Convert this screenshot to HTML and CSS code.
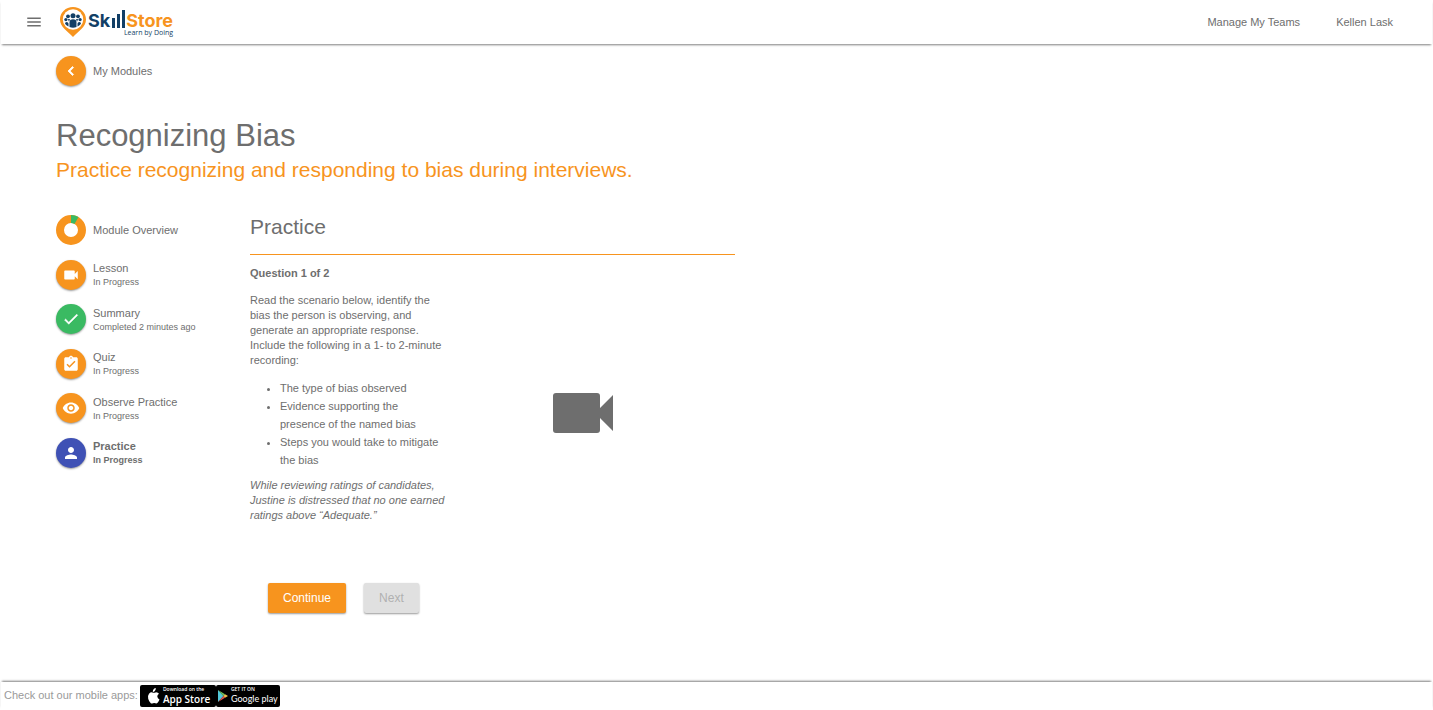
FILE: index.html
```html
<!DOCTYPE html>
<html lang="en">
<head>
<meta charset="utf-8">
<title>SkillStore - Recognizing Bias</title>
<link rel="stylesheet" href="styles.css">
</head>
<body>
<header class="topbar">
  <button class="menu-btn" aria-label="Menu">
    <svg width="18" height="18" viewBox="0 0 24 24"><path d="M3 18h18v-2H3v2zm0-5h18v-2H3v2zm0-7v2h18V6H3z"/></svg>
  </button>
  <a class="logo" href="#">
    <svg width="26" height="30" viewBox="0 0 26 30" aria-hidden="true">
      <path fill="#f7941e" d="M13 0C5.800 0 0 5.500 0 12.500C0 20 8 24.500 13 30C18 24.500 26 20 26 12.500C26 5.500 20.200 0 13 0z"/>
      <circle cx="13" cy="12.500" r="10.200" fill="#fff"/>
      <g fill="#123f66">
        <circle cx="13" cy="8.800" r="2.500"/>
        <circle cx="8" cy="9.300" r="1.900"/>
        <circle cx="18" cy="9.300" r="1.900"/>
        <circle cx="5.900" cy="12.600" r="1.600"/>
        <circle cx="20.100" cy="12.600" r="1.600"/>
        <path d="M9.500 20v-4.500q0-3.300 3.500-3.300t3.500 3.300V20q-3.500 1.300-7 0z"/>
        <path d="M5 16.800q0-1.900 1.700-1.900t1.800 1.700v2.800q-2.300-.8-3.500-2.600zM21 16.800q0-1.900-1.700-1.900t-1.800 1.700v2.800q2.300-.8 3.500-2.600z"/>
        <path d="M7.800 12l2.400.2-1.300 2.200zM18.200 12l-2.400.2 1.300 2.200z"/>
      </g>
    </svg>
    <span class="wordmark">
      <span class="brand"><span class="brand-skill">Sk</span><svg width="15" height="18" viewBox="0 0 15 18" role="img" aria-label="ill"><path fill="#123f66" d="M1 8h3v10H1zM6 4h3v14H6zM11 0h3v18h-3z"/></svg><span class="brand-store">Store</span></span>
      <span class="tagline">Learn by Doing</span>
    </span>
  </a>
  <nav class="topnav">
    <a href="#">Manage My Teams</a>
    <a href="#">Kellen Lask</a>
  </nav>
</header>

<main class="page">
  <a class="step back" href="#">
    <span class="disc"><svg width="18" height="18" viewBox="0 0 24 24"><path d="M15.410 7.410L14 6l-6 6 6 6 1.410-1.410L10.830 12z" stroke="#fff"/></svg></span>
    <span>My Modules</span>
  </a>
  <h1 class="title">Recognizing Bias</h1>
  <p class="subtitle">Practice recognizing and responding to bias during interviews.</p>

  <div class="columns">
    <nav class="steps">
      <a class="step" href="#">
        <svg width="30" height="30" viewBox="0 0 30 30"><circle cx="15" cy="15" r="11" fill="none" stroke="#f7941e" stroke-width="8"/><path d="M15 0A15 15 0 0 1 22.500 2L18.500 9A7 7 0 0 0 15 8z" fill="#3aba62"/></svg>
        <span>Module Overview</span>
      </a>
      <a class="step" href="#">
        <span class="disc"><svg width="18" height="18" viewBox="0 0 24 24"><path d="M17 10.500V7c0-.55-.45-1-1-1H4c-.55 0-1 .45-1 1v10c0 .55.45 1 1 1h12c.55 0 1-.45 1-1v-3.500l4 4v-11l-4 4z"/></svg></span>
        <span>Lesson<small>In Progress</small></span>
      </a>
      <a class="step" href="#">
        <span class="disc done"><svg width="18" height="18" viewBox="0 0 24 24"><path d="M9 16.170L4.830 12l-1.420 1.410L9 19 21 7l-1.410-1.410z" stroke="#fff" stroke-width=".6"/></svg></span>
        <span>Summary<small>Completed 2 minutes ago</small></span>
      </a>
      <a class="step" href="#">
        <span class="disc"><svg width="18" height="18" viewBox="0 0 24 24"><path d="M19 3h-4.180C14.400 1.840 13.300 1 12 1c-1.300 0-2.400.84-2.820 2H5c-1.100 0-2 .9-2 2v14c0 1.100.9 2 2 2h14c1.100 0 2-.9 2-2V5c0-1.100-.9-2-2-2zm-7 0c.55 0 1 .45 1 1s-.45 1-1 1-1-.45-1-1 .45-1 1-1zm-2 14l-4-4 1.410-1.410L10 14.170l6.590-6.590L18 9l-8 8z"/></svg></span>
        <span>Quiz<small>In Progress</small></span>
      </a>
      <a class="step" href="#">
        <span class="disc"><svg width="18" height="18" viewBox="0 0 24 24"><path d="M12 4.500C7 4.500 2.730 7.610 1 12c1.730 4.390 6 7.500 11 7.500s9.270-3.110 11-7.500c-1.730-4.390-6-7.500-11-7.500zM12 17c-2.760 0-5-2.240-5-5s2.240-5 5-5 5 2.240 5 5-2.240 5-5 5zm0-8c-1.660 0-3 1.340-3 3s1.340 3 3 3 3-1.340 3-3-1.340-3-3-3z"/></svg></span>
        <span>Observe Practice<small>In Progress</small></span>
      </a>
      <a class="step current" href="#" aria-current="step">
        <span class="disc active"><svg width="18" height="18" viewBox="0 0 24 24"><path d="M12 12c2.210 0 4-1.790 4-4s-1.790-4-4-4-4 1.790-4 4 1.790 4 4 4zm0 2c-2.670 0-8 1.340-8 4v2h16v-2c0-2.660-5.330-4-8-4z"/></svg></span>
        <span>Practice<small>In Progress</small></span>
      </a>
    </nav>

    <section class="practice">
      <h2 class="section-title">Practice</h2>
      <div class="question">
        <div class="prompt">
          <h3>Question 1 of 2</h3>
          <p>Read the scenario below, identify the bias the person is observing, and generate an appropriate response. Include the following in a 1- to 2-minute recording:</p>
          <ul>
            <li>The type of bias observed</li>
            <li>Evidence supporting the presence of the named bias</li>
            <li>Steps you would take to mitigate the bias</li>
          </ul>
          <p><em>While reviewing ratings of candidates, Justine is distressed that no one earned ratings above “Adequate.”</em></p>
        </div>
        <div class="camera">
          <svg width="80" height="80" viewBox="0 0 80 80" role="img" aria-label="Video camera"><path d="M13 20h41a3 3 0 0 1 3 3v12L70 22v36L57 45v12a3 3 0 0 1-3 3H13a3 3 0 0 1-3-3V23a3 3 0 0 1 3-3z"/></svg>
        </div>
      </div>
      <div class="actions">
        <button class="btn primary">Continue</button>
        <button class="btn" disabled>Next</button>
      </div>
    </section>
  </div>
</main>

<footer class="footer">
  <span class="footer-note">Check out our mobile apps:</span>
  <a class="badge app-store" href="#">
    <svg width="14" height="16" viewBox="0 0 14 16" aria-hidden="true"><path fill="#fff" d="M9.800 0Q10 2.100 8.600 3.200 7.700 4 6.800 3.900 6.700 2.200 7.800 1.100 8.700.2 9.800 0zM10.100 4.200Q12.100 4.300 13 5.700 11.200 6.800 11.300 8.600 11.500 10.800 13.500 11.500 12.800 13.400 11.600 14.800 10.700 15.700 9.500 15.300 8.200 14.700 6.900 15.300 5.700 15.900 4.800 15.200 2.900 13.500 2.200 10.700 1.500 7.600 3 5.700 4.900 3.700 7.100 4.700 8.300 4.900 10.100 4.200z"/></svg>
    <span class="badge-text"><span class="badge-small">Download on the</span><span class="badge-big">App Store</span></span>
  </a>
  <a class="badge google" href="#">
    <svg width="10" height="12" viewBox="0 0 10 12" aria-hidden="true"><path fill="#52c7d8" d="M0 0l5.500 6L0 12z"/><path fill="#70c35b" d="M0 0l7 4.300L5.500 6z"/><path fill="#e6534e" d="M0 12l7-4.300L5.500 6z"/><path fill="#f3c14b" d="M7 4.300L10 6 7 7.700 5.500 6z"/></svg>
    <span class="badge-text"><span class="badge-small">GET IT ON</span><span class="badge-big">Google play</span></span>
  </a>
</footer>
</body>
</html>
```
FILE: styles.css
```css
* { box-sizing: border-box; }

body {
  margin: 0;
  min-height: 100vh;
  display: flex;
  flex-direction: column;
  background: #fff;
  color: #6e6e6e;
  font: 11px/15px "Liberation Sans", Arial, sans-serif;
}

a { color: inherit; text-decoration: none; }
svg { display: block; flex: none; }
h1, h2, h3, p { margin: 0; font-weight: 400; }

.topbar {
  display: flex;
  align-items: center;
  height: 44px;
  margin: 0 1px;
  padding: 0 39px 0 24px;
  box-shadow: 0 2px 2px -1px rgba(0, 0, 0, .5);
}

.menu-btn {
  padding: 0;
  border: 0;
  background: none;
  fill: #6e6e6e;
}

.logo { display: flex; margin-left: 17px; }
.wordmark { display: flex; flex-direction: column; margin-left: 2px; padding-top: 3px; }

.brand {
  display: flex;
  align-items: flex-end;
  height: 18px;
  color: #123f66;
  font: 700 18px/14px Inter, "Liberation Sans", sans-serif;
}

.brand svg { margin-left: 1px; }
.brand-store { color: #f7941e; }

.tagline {
  color: #123f66;
  font: 7px/10px "Open Sans", sans-serif;
  text-align: right;
}

.topnav { display: flex; gap: 36px; margin-left: auto; }

.page { flex: 1; padding: 12px 56px; }

.step { display: flex; align-items: center; gap: 7px; min-height: 30px; }
.step small { display: block; font-size: 9px; line-height: 12px; }
.current { font-weight: 700; }

.disc {
  display: grid;
  place-items: center;
  width: 30px;
  height: 30px;
  flex: none;
  border-radius: 50%;
  background: #f7941e;
  fill: #fff;
  box-shadow: 0 1px 2px rgba(0, 0, 0, .4);
}

.done { background: #3aba62; }
.active { background: #3f51b5; }

.title { margin-top: 30px; font-size: 31px; line-height: 40px; }
.subtitle { color: #f7941e; font-size: 21px; line-height: 28px; }

.columns { display: flex; align-items: flex-start; gap: 44px; margin-top: 31px; }

.steps {
  display: flex;
  flex-direction: column;
  justify-content: space-between;
  width: 150px;
  min-height: 253px;
  flex: none;
}

.practice { flex: 0 1 485px; }

.section-title {
  padding-bottom: 15px;
  border-bottom: 1px solid #f7941e;
  font-size: 21px;
  line-height: 24px;
}

.question { display: flex; }
.prompt { width: 196px; padding-top: 11px; flex: none; }
.prompt h3 { margin-bottom: 12px; font-size: 11px; font-weight: 700; }
.prompt ul { margin: 11px 0 9px; padding-left: 30px; line-height: 18px; }
.camera { flex: 1; display: flex; justify-content: center; padding: 118px 15px 0 0; fill: #6e6e6e; }

.actions { display: flex; gap: 18px; margin: 60px 0 0 18px; }

.btn {
  height: 30px;
  padding: 0 15px;
  border: 0;
  border-radius: 2px;
  background: #e0e0e0;
  color: #b0b0b0;
  font: 12px/30px "Liberation Sans", Arial, sans-serif;
  box-shadow: 0 1px 2px rgba(0, 0, 0, .4);
}

.primary { background: #f7941e; color: #fff; }

.footer {
  display: flex;
  align-items: center;
  height: 28px;
  margin: 0 1px;
  padding: 0 3px 1px;
  box-shadow: 0 -2px 2px -1px rgba(0, 0, 0, .5);
}

.footer-note { margin-right: 2px; color: #9a9a9a; }

.badge {
  display: flex;
  align-items: center;
  height: 22px;
  border-radius: 2px;
  background: #000;
  color: #fff;
  white-space: nowrap;
}

.badge-text { display: flex; flex-direction: column; }
.app-store { width: 76px; gap: 3px; padding-left: 6px; }
.google { width: 64px; gap: 3px; padding-left: 2px; }
.badge-small { font: 600 5px/7px "Open Sans", sans-serif; }
.badge-big { font: 600 10px/12px "Open Sans", sans-serif; }
.google .badge-big { font: 9px/12px Lato, sans-serif; }
```
